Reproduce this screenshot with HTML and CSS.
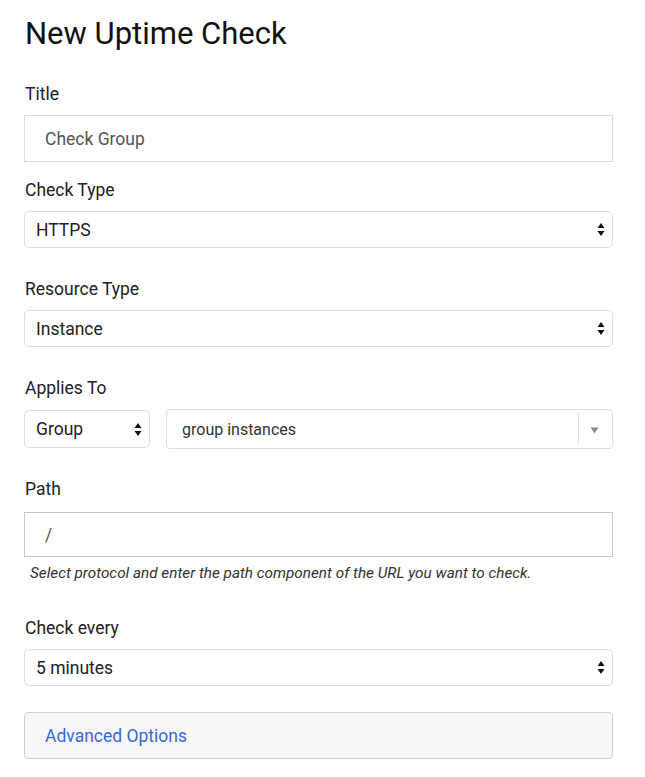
FILE: index.html
```html
<!DOCTYPE html>
<html>
<head>
<meta charset="utf-8">
<title>New Uptime Check</title>
<link rel="stylesheet" href="styles.css">
</head>
<body>
<div class="page">
  <h1 class="heading">New Uptime Check</h1>

  <div class="field field-input">
    <div class="label">Title</div>
    <div class="text-input"><span class="value-muted">Check Group</span></div>
  </div>

  <div class="field field-select">
    <div class="label">Check Type</div>
    <div class="select">
      <span>HTTPS</span>
      <svg class="updown" width="8" height="15" viewBox="0 0 8 15"><path d="M4 1 L7.5 6 L0.5 6 Z M4 14 L7.5 9 L0.5 9 Z" fill="#111"/></svg>
    </div>
  </div>

  <div class="field field-select">
    <div class="label">Resource Type</div>
    <div class="select">
      <span>Instance</span>
      <svg class="updown" width="8" height="15" viewBox="0 0 8 15"><path d="M4 1 L7.5 6 L0.5 6 Z M4 14 L7.5 9 L0.5 9 Z" fill="#111"/></svg>
    </div>
  </div>

  <div class="field field-applies">
    <div class="label">Applies To</div>
    <div class="applies-row">
      <div class="select select-small">
        <span>Group</span>
        <svg class="updown" width="8" height="15" viewBox="0 0 8 15"><path d="M4 1 L7.5 6 L0.5 6 Z M4 14 L7.5 9 L0.5 9 Z" fill="#111"/></svg>
      </div>
      <div class="combo">
        <span class="combo-text">group instances</span>
        <span class="combo-divider"></span>
        <svg class="combo-arrow" width="9" height="7" viewBox="0 0 9 7"><path d="M0.5 0.5 L8.5 0.5 L4.5 6.5 Z" fill="#8a8a8a"/></svg>
      </div>
    </div>
  </div>

  <div class="field field-path">
    <div class="label label-path">Path</div>
    <div class="text-input path-input"><span class="value-muted">/</span></div>
    <div class="help">Select protocol and enter the path component of the URL you want to check.</div>
  </div>

  <div class="field field-every">
    <div class="label">Check every</div>
    <div class="select">
      <span>5 minutes</span>
      <svg class="updown" width="8" height="15" viewBox="0 0 8 15"><path d="M4 1 L7.5 6 L0.5 6 Z M4 14 L7.5 9 L0.5 9 Z" fill="#111"/></svg>
    </div>
  </div>

  <div class="advanced">Advanced Options</div>
</div>
</body>
</html>
```

FILE: styles.css
```css
* { box-sizing: border-box; }

html, body {
  margin: 0;
  padding: 0;
  background: #ffffff;
}

body {
  font-family: Roboto, "Liberation Sans", Arial, sans-serif;
  color: #222;
}

.page {
  padding: 16px 32px 0 24px;
}

.heading {
  margin: 0 0 32px 1px;
  font-size: 31px;
  line-height: 36px;
  font-weight: 400;
  color: #111;
}

.label {
  font-size: 17.5px;
  line-height: 20px;
  color: #222;
  margin-bottom: 11px;
  padding-left: 1px;
}

.field-input { margin-bottom: 18px; }
.field-select { margin-bottom: 31px; }
.field-applies { margin-bottom: 30px; }
.field-path { margin-bottom: 36px; }
.field-every { margin-bottom: 26px; }

.label-path { margin-bottom: 13px; }

.text-input {
  height: 47px;
  border: 1px solid #dcdcdc;
  display: flex;
  align-items: center;
  padding-left: 20px;
  font-size: 17.5px;
}

.value-muted { color: #555; }

.path-input {
  height: 45px;
  border: 1px solid #c8c8c8;
}

.select {
  height: 37px;
  border: 1px solid #dedede;
  border-radius: 5px;
  display: flex;
  align-items: center;
  justify-content: space-between;
  padding: 0 7px 0 11px;
  font-size: 17.5px;
  color: #222;
  background: #fff;
}

.updown { display: block; }

.applies-row {
  display: flex;
  gap: 16px;
  align-items: center;
}

.select-small {
  width: 126px;
  height: 38px;
}

.combo {
  flex: 1;
  height: 40px;
  border: 1px solid #dedede;
  border-radius: 4px;
  display: flex;
  align-items: center;
  padding-left: 15px;
  font-size: 16px;
  color: #333;
}

.combo-text { flex: 1; }

.combo-divider {
  width: 1px;
  align-self: stretch;
  margin: 2px 0 4px;
  background: #dcdcdc;
}

.combo-arrow {
  display: block;
  margin: 2px 13px 0 11px;
}

.help {
  margin-top: 7px;
  padding-left: 6px;
  font-size: 15.3px;
  line-height: 18px;
  font-style: italic;
  color: #333;
}

.advanced {
  height: 47px;
  border: 1px solid #cfcfcf;
  border-radius: 4px;
  background: #f7f7f7;
  display: flex;
  align-items: center;
  padding-left: 20px;
  font-size: 17.5px;
  color: #3a68d8;
}
```
